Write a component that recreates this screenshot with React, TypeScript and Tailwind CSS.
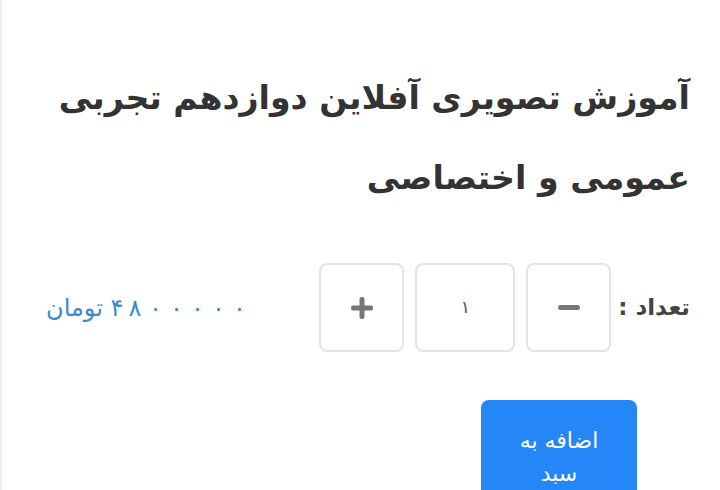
const priceDigits = ['۴', '۸', '۰', '۰', '۰', '۰', '۰']

export default function App() {
  return (
    <div
      dir="rtl"
      className="w-[720px] h-[490px] overflow-hidden bg-white border-l-2 border-[#ececec] pr-[30px] pl-[40px]"
      style={{ fontFamily: '"DejaVu Sans", "Noto Sans", sans-serif' }}
    >
      <h1 className="pt-[58px] text-[33.2px] leading-[80px] font-bold text-[#333]">
        آموزش تصویری آفلاین دوازدهم تجربی عمومی و اختصاصی
      </h1>

      <div className="mt-[45px] flex items-center justify-between">
        <div className="flex items-center">
          <span className="text-[23px] text-[#444] font-bold ml-[7px]">تعداد :</span>
          <div className="flex items-center gap-[11px]">
            <button className="w-[85px] h-[89px] rounded-[8px] border-2 border-[#e3e3e3] flex items-center justify-center">
              <span className="block w-[22px] h-[5px] rounded-full bg-[#777]" />
            </button>
            <div className="w-[100px] h-[89px] rounded-[8px] border-2 border-[#e3e3e3] flex items-center justify-center text-[17px] text-[#555]">
              ۱
            </div>
            <button className="w-[85px] h-[89px] rounded-[8px] border-2 border-[#e3e3e3] flex items-center justify-center text-[#777]">
              <svg width="22" height="22" viewBox="0 0 22 22">
                <rect x="0" y="8.5" width="22" height="5" rx="2" fill="currentColor" />
                <rect x="8.5" y="0" width="5" height="22" rx="2" fill="currentColor" />
              </svg>
            </button>
          </div>
        </div>
        <div className="flex items-center text-[24px] text-[#3b8ad0] ml-[4px]">
          <span dir="ltr" className="flex">
            {priceDigits.map((d, i) => (
              <span key={i} className={`inline-block text-center ${i === 0 ? 'w-[16px]' : i === 1 ? 'w-[20px]' : 'w-[21px]'}`}>
                {d}
              </span>
            ))}
          </span>
          <span className="mr-[6px]">تومان</span>
        </div>
      </div>

      <div className="mt-[48px] mr-[53px]">
        <button className="w-[156px] h-[110px] rounded-[8px] bg-[#2486f7] text-white text-[22px] leading-[33px] pt-[24px] flex flex-col items-center justify-start">
          <span>اضافه به</span>
          <span>سبد</span>
        </button>
      </div>
    </div>
  )
}
